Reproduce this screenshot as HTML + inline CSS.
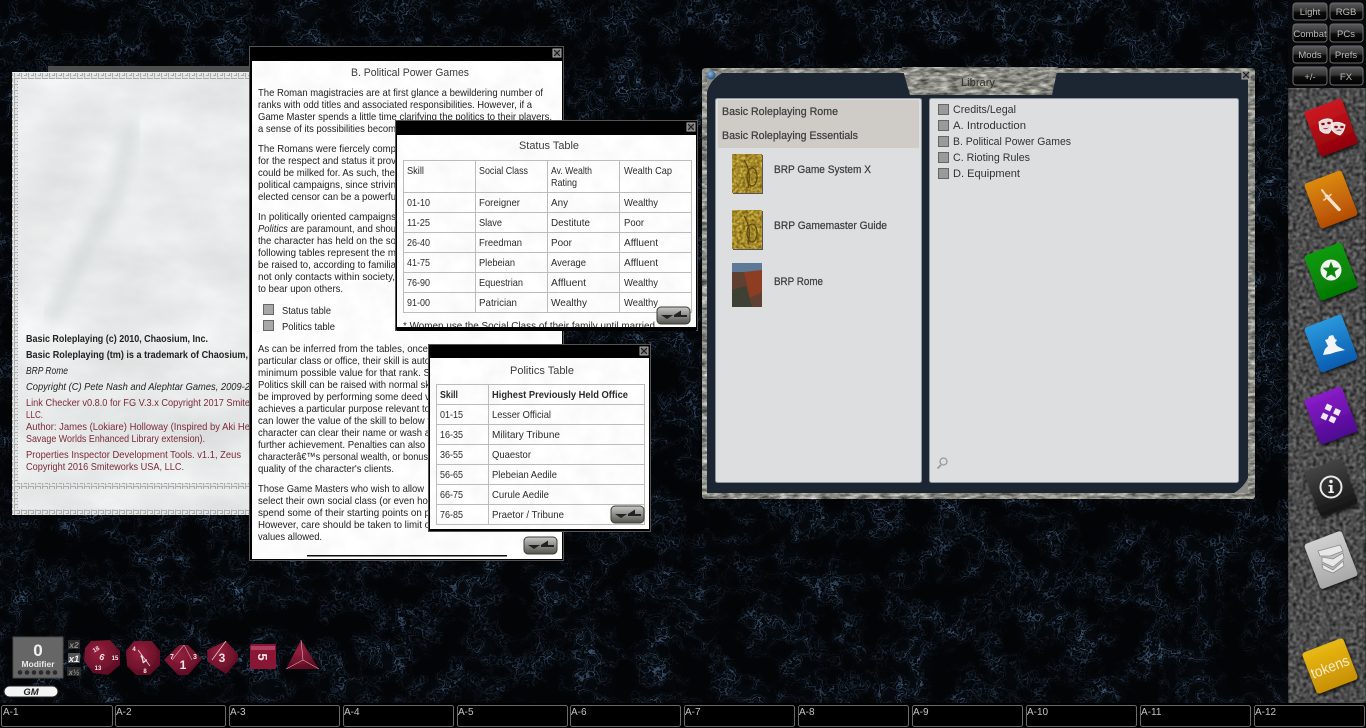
<!DOCTYPE html>
<html lang="en"><head><meta charset="utf-8"><title>Library</title>
<style>
html,body{margin:0;padding:0;background:#05080c;width:1366px;height:728px;overflow:hidden}
svg{display:block}
text{font-family:"Liberation Sans",sans-serif;font-size:10.5px;fill:#222}
.b{font-weight:bold}.i{font-style:italic}
.r{fill:#7c2a38}
.lib{font-size:11px;fill:#3e3e3e;stroke:#3e3e3e;stroke-width:.25px}
.li{font-size:11px;fill:#333}
.tb{font-size:10.5px;fill:#2c2c2c}
.t{font-size:11px;fill:#3c3c3c}
.btn{font-size:9.5px;fill:#b8b8b8;text-anchor:middle}
.hk{font-size:10px;fill:#c4c4c4}
.d{fill:#f0e6e6;font-weight:bold;text-anchor:middle}
</style></head><body>
<svg xmlns="http://www.w3.org/2000/svg" width="1366" height="728" viewBox="0 0 1366 728">
<defs>
<filter id="veins" x="0" y="0" width="100%" height="100%" color-interpolation-filters="sRGB">
<feTurbulence type="fractalNoise" baseFrequency=".05" numOctaves="5" seed="11"/>
<feColorMatrix values="1 0 0 0 0 1 0 0 0 0 1 0 0 0 0 0 0 0 0 1"/>
<feComponentTransfer result="v">
<feFuncR type="table" tableValues="0 0 0 0 0 0 0 0 0 0 0 0 0 0 0 0 .4 0 0 0 .85 0 0 0 .4 0 0 0 0 0 0 0 0 0 0 0 0 0 0 0 0"/>
<feFuncG type="table" tableValues="0 0 0 0 0 0 0 0 0 0 0 0 0 0 0 0 .4 0 0 0 .85 0 0 0 .4 0 0 0 0 0 0 0 0 0 0 0 0 0 0 0 0"/>
<feFuncB type="table" tableValues="0 0 0 0 0 0 0 0 0 0 0 0 0 0 0 0 .4 0 0 0 .85 0 0 0 .4 0 0 0 0 0 0 0 0 0 0 0 0 0 0 0 0"/>
</feComponentTransfer>
<feTurbulence type="fractalNoise" baseFrequency=".028" numOctaves="3" seed="23"/>
<feColorMatrix values="2.4 0 0 0 -.8 2.4 0 0 0 -.8 2.4 0 0 0 -.8 0 0 0 0 1" result="m"/>
<feComposite in="v" in2="m" operator="arithmetic" k1="1" k2="0" k3=".05" k4=".01"/>
<feColorMatrix values=".3 0 0 0 .004 .42 0 0 0 .01 .56 0 0 0 .018 0 0 0 0 1"/>
<feGaussianBlur stdDeviation=".35"/>
</filter>
<filter id="gran" x="0" y="0" width="100%" height="100%" color-interpolation-filters="sRGB">
<feTurbulence type="fractalNoise" baseFrequency=".3" numOctaves="3" seed="4"/>
<feColorMatrix values=".72 0 0 0 -.06 .72 0 0 0 -.06 .72 0 0 0 -.06 0 0 0 0 1"/>
<feGaussianBlur stdDeviation=".7"/>
</filter>
<filter id="metal" x="-5%" y="-5%" width="110%" height="110%" color-interpolation-filters="sRGB">
<feTurbulence type="fractalNoise" baseFrequency=".1 .3" numOctaves="3" seed="9" result="n"/>
<feColorMatrix in="n" values=".85 0 0 0 .12 .85 0 0 0 .12 .82 0 0 0 .11 0 0 0 0 1" result="g"/>
<feComposite in="g" in2="SourceAlpha" operator="in"/>
</filter>
<filter id="marble" x="0" y="0" width="100%" height="100%" color-interpolation-filters="sRGB">
<feTurbulence type="fractalNoise" baseFrequency=".012 .02" numOctaves="5" seed="3"/>
<feColorMatrix values=".13 0 0 0 .845 .13 0 0 0 .855 .13 0 0 0 .855 0 0 0 0 1"/>
</filter>
<filter id="paper" x="0" y="0" width="100%" height="100%" color-interpolation-filters="sRGB">
<feTurbulence type="fractalNoise" baseFrequency=".05" numOctaves="3" seed="6"/>
<feColorMatrix values=".05 0 0 0 .965 .05 0 0 0 .965 .05 0 0 0 .965 0 0 0 0 1"/>
</filter>
<filter id="gold" x="0" y="0" width="100%" height="100%" color-interpolation-filters="sRGB">
<feTurbulence type="fractalNoise" baseFrequency=".35" numOctaves="2" seed="2"/>
<feColorMatrix values=".7 0 0 0 .3 .65 0 0 0 .22 .3 0 0 0 .02 0 0 0 0 1"/>
</filter>
<filter id="sm"><feGaussianBlur stdDeviation=".3"/></filter>
<filter id="bl"><feGaussianBlur stdDeviation="7"/></filter>
<filter id="sh" x="-20%" y="-20%" width="150%" height="150%"><feDropShadow dx="1" dy="2" stdDeviation="1.500" flood-color="#000" flood-opacity=".75"/></filter>
<pattern id="key" width="7" height="6" patternUnits="userSpaceOnUse">
<rect width="7" height="6" fill="#e3e5e4"/><path d="M.5 5.500V.5H5.500V3.500H3" fill="none" stroke="#a8abaa" stroke-width="1"/>
</pattern>
<linearGradient id="cr" x1="0" y1="0" x2="0" y2="1"><stop offset="0" stop-color="#cc1a22"/><stop offset="1" stop-color="#900008"/></linearGradient>
<linearGradient id="co" x1="0" y1="0" x2="0" y2="1"><stop offset="0" stop-color="#dc8a10"/><stop offset="1" stop-color="#b44c04"/></linearGradient>
<linearGradient id="cg" x1="0" y1="0" x2="0" y2="1"><stop offset="0" stop-color="#109a10"/><stop offset="1" stop-color="#047804"/></linearGradient>
<linearGradient id="cb" x1="0" y1="0" x2="0" y2="1"><stop offset="0" stop-color="#2a98dc"/><stop offset="1" stop-color="#0a5cb0"/></linearGradient>
<linearGradient id="cp" x1="0" y1="0" x2="0" y2="1"><stop offset="0" stop-color="#8a1cc8"/><stop offset="1" stop-color="#4c0a90"/></linearGradient>
<linearGradient id="ck" x1="0" y1="0" x2="0" y2="1"><stop offset="0" stop-color="#444"/><stop offset="1" stop-color="#151515"/></linearGradient>
<linearGradient id="cw" x1="0" y1="0" x2="0" y2="1"><stop offset="0" stop-color="#d0d0d0"/><stop offset="1" stop-color="#a8a8a8"/></linearGradient>
<linearGradient id="cy" x1="0" y1="0" x2="0" y2="1"><stop offset="0" stop-color="#e8b814"/><stop offset="1" stop-color="#c89004"/></linearGradient>
<linearGradient id="bt" x1="0" y1="0" x2="0" y2="1"><stop offset="0" stop-color="#5c5c5c"/><stop offset=".45" stop-color="#333"/><stop offset=".55" stop-color="#0c0c0c"/><stop offset="1" stop-color="#000"/></linearGradient>
<linearGradient id="nv" x1="0" y1="0" x2="0" y2="1"><stop offset="0" stop-color="#c8c8c4"/><stop offset=".5" stop-color="#8c8c88"/><stop offset="1" stop-color="#55554f"/></linearGradient>
<radialGradient id="die" cx=".4" cy=".35" r=".75"><stop offset="0" stop-color="#96203e"/><stop offset="1" stop-color="#560a20"/></radialGradient>
<radialGradient id="orb" cx=".4" cy=".35" r=".7"><stop offset="0" stop-color="#8ab8e0"/><stop offset="1" stop-color="#1c4a74"/></radialGradient>
<g id="nav">
<rect x="0" y="0" width="33" height="17" rx="4" fill="url(#nv)" stroke="#3c3c38"/>
<path d="M4 8H16L10 12ZM17 8L24 3.500L24 8H30V10H17Z" fill="#222"/>
</g>
<g id="x"><rect x="-4" y="-4" width="8" height="8" fill="#777" stroke="#aaa"/><path d="M-3-3 3 3M3-3-3 3" stroke="#1a1a1a" stroke-width="1.100"/></g>
</defs>

<rect width="1366" height="728" filter="url(#veins)"/>

<!-- side panel -->
<rect x="1288" y="0" width="78" height="728" filter="url(#gran)"/>
<rect x="1288" y="0" width="78" height="88" fill="#07090c"/>

<!-- top buttons -->
<g stroke="#6a6a6a" stroke-width="1">
<rect x="1293" y="3" width="34" height="17" rx="3" fill="url(#bt)"/><rect x="1330" y="3" width="33" height="17" rx="3" fill="url(#bt)"/>
<rect x="1293" y="24" width="34" height="18" rx="3" fill="url(#bt)"/><rect x="1330" y="24" width="33" height="18" rx="3" fill="url(#bt)"/>
<rect x="1293" y="46" width="34" height="17" rx="3" fill="url(#bt)"/><rect x="1330" y="46" width="33" height="17" rx="3" fill="url(#bt)"/>
<rect x="1293" y="67" width="34" height="18" rx="3" fill="url(#bt)"/><rect x="1330" y="67" width="33" height="18" rx="3" fill="url(#bt)"/>
</g>
<text class="btn" x="1310" y="15">Light</text><text class="btn" x="1346" y="15">RGB</text>
<text class="btn" x="1310" y="37">Combat</text><text class="btn" x="1346" y="37">PCs</text>
<text class="btn" x="1310" y="58">Mods</text><text class="btn" x="1346" y="58">Prefs</text>
<text class="btn" x="1310" y="80">+/-</text><text class="btn" x="1346" y="80">FX</text>

<!-- side cards -->
<g filter="url(#sh)">
<rect x="-20" y="-24" width="40" height="48" rx="3" transform="translate(1331 127.500) rotate(-21)" fill="url(#cr)"/>
<rect x="-20" y="-24" width="40" height="48" rx="3" transform="translate(1331 199.500) rotate(-21)" fill="url(#co)"/>
<rect x="-20" y="-24" width="40" height="48" rx="3" transform="translate(1331 271.500) rotate(-21)" fill="url(#cg)"/>
<rect x="-20" y="-24" width="40" height="48" rx="3" transform="translate(1331 343.500) rotate(-21)" fill="url(#cb)"/>
<rect x="-20" y="-24" width="40" height="48" rx="3" transform="translate(1331 415.500) rotate(-21)" fill="url(#cp)"/>
<rect x="-20" y="-24" width="40" height="48" rx="3" transform="translate(1331 487.500) rotate(-21)" fill="url(#ck)"/>
<rect x="-20" y="-24" width="40" height="48" rx="3" transform="translate(1331 560) rotate(-21)" fill="url(#cw)"/>
<rect x="-22" y="-22" width="44" height="44" rx="3" transform="translate(1330 666) rotate(-21)" fill="url(#cy)"/>
</g>
<!-- masks -->
<g fill="#e8d8d8" stroke="#f8f0f0" stroke-width="1">
<path d="M1319 122Q1326 117 1332 120Q1333 128 1329 133Q1323 134 1320 130Z"/>
<path d="M1333 123Q1339 121 1345 125Q1344 132 1340 135Q1335 134 1332 130Z"/>
</g>
<g fill="#8a0a10">
<ellipse cx="1323" cy="124" rx="1.800" ry="1.200"/><ellipse cx="1329" cy="123" rx="1.800" ry="1.200"/><path d="M1323 128Q1326 131 1329 127Q1327 129 1323 128Z"/>
<ellipse cx="1336" cy="127" rx="1.800" ry="1.200"/><ellipse cx="1342" cy="127" rx="1.800" ry="1.200"/><path d="M1336 131Q1339 128 1342 131Q1339 130 1336 131Z"/>
</g>
<!-- sword -->
<path d="M1322 190L1326.500 196" stroke="#f0d8c0" stroke-width="2" stroke-linecap="round"/>
<path d="M1326.500 196L1339 209.500" stroke="#f6e4d0" stroke-width="3.400" stroke-linecap="round"/>
<path d="M1324 200L1331 194.500" stroke="#f0d8c0" stroke-width="1.600" stroke-linecap="round"/>
<!-- star -->
<circle cx="1331" cy="270" r="10.500" fill="#f4f4f4"/>
<path d="M1331 261.500L1333.300 267.500L1339.500 267.800L1334.700 271.800L1336.300 278L1331 274.500L1325.700 278L1327.300 271.800L1322.500 267.800L1328.700 267.500Z" fill="#0a860a"/>
<!-- wizard -->
<path d="M1323 355L1325 349L1328 346L1326 342L1325 340L1328 339L1329 336L1333 335L1335 339L1337 340L1335 343L1337 346L1345 350L1336 352L1330 354Z" fill="#f2f4f6"/>
<!-- purple -->
<g fill="#f0e8f6" stroke="#f0e8f6" stroke-width="1" stroke-linejoin="round">
<rect x="-2.500" y="-2.500" width="5" height="5" transform="translate(1328.500 407.500) rotate(25)"/>
<rect x="-2.500" y="-2.500" width="5" height="5" transform="translate(1337 412) rotate(25)"/>
<rect x="-2.500" y="-2.500" width="5" height="5" transform="translate(1324.500 416.500) rotate(25)"/>
<rect x="-2.500" y="-2.500" width="5" height="5" transform="translate(1332.500 419.500) rotate(25)"/>
</g>
<!-- info -->
<circle cx="1331" cy="487" r="10.500" fill="none" stroke="#e8e8e8" stroke-width="2"/>
<circle cx="1331" cy="481.500" r="1.700" fill="#eee"/><path d="M1328.500 485H1332.500V491.500H1334V493H1328.500V491.500H1330V486.500H1328.500Z" fill="#eee"/>
<!-- stack -->
<g fill="#e8e8e8" stroke="#8a8a8a" stroke-width=".8">
<path d="M1318 551L1340 545L1343 551L1330 556L1320 556Z"/>
<path d="M1322 557L1333 559L1343 553L1344 558L1333 567L1322 562Z"/>
<path d="M1322 564L1333 570L1343 561L1344 566L1333 573L1323 569Z"/>
</g>
<text x="0" y="5" transform="translate(1330 667) rotate(-21)" text-anchor="middle" style="font-size:15px;fill:#f6ecc8" textLength="40" lengthAdjust="spacingAndGlyphs">tokens</text>

<g filter="url(#sm)">
<!-- marble window -->
<rect x="48" y="66" width="205" height="6" fill="#4e4e4e"/>
<rect x="12" y="72" width="240" height="443" filter="url(#marble)"/>
<path d="M132 120L118 190L85 250L52 320" stroke="#c6cdce" stroke-width="14" fill="none" filter="url(#bl)" opacity=".55"/>
<rect x="12" y="73" width="240" height="6" fill="url(#key)"/>
<rect x="12" y="73" width="6" height="442" fill="url(#key)"/>
<rect x="12" y="483" width="240" height="6" fill="url(#key)"/>
<rect x="12" y="509" width="240" height="6" fill="url(#key)"/>
<text class="b" x="26" y="342" textLength="182" lengthAdjust="spacingAndGlyphs">Basic Roleplaying (c) 2010, Chaosium, Inc.</text>
<text class="b" x="26" y="358" textLength="222" lengthAdjust="spacingAndGlyphs">Basic Roleplaying (tm) is a trademark of Chaosium,</text>
<text class="i" x="26" y="374" textLength="42" lengthAdjust="spacingAndGlyphs">BRP Rome</text>
<text class="i" x="26" y="390" textLength="224" lengthAdjust="spacingAndGlyphs">Copyright (C) Pete Nash and Alephtar Games, 2009-2</text>
<text class="r" x="26" y="406" textLength="224" lengthAdjust="spacingAndGlyphs">Link Checker v0.8.0 for FG V.3.x Copyright 2017 Smite</text>
<text class="r" x="26" y="418" textLength="17" lengthAdjust="spacingAndGlyphs">LLC.</text>
<text class="r" x="26" y="430" textLength="224" lengthAdjust="spacingAndGlyphs">Author: James (Lokiare) Holloway (Inspired by Aki He</text>
<text class="r" x="26" y="442" textLength="179" lengthAdjust="spacingAndGlyphs">Savage Worlds Enhanced Library extension).</text>
<text class="r" x="26" y="458" textLength="215" lengthAdjust="spacingAndGlyphs">Properties Inspector Development Tools. v1.1, Zeus</text>
<text class="r" x="26" y="470" textLength="158" lengthAdjust="spacingAndGlyphs">Copyright 2016 Smiteworks USA, LLC.</text>

<!-- book window -->
<rect x="249.500" y="46.500" width="314" height="514" fill="#000" stroke="#555"/>
<rect x="252" y="61" width="310" height="498" filter="url(#paper)"/>
<use href="#x" x="557" y="53"/>
<text class="t" x="351" y="76" textLength="118" lengthAdjust="spacingAndGlyphs">B. Political Power Games</text>
<text x="258" y="96" textLength="285" lengthAdjust="spacingAndGlyphs">The Roman magistracies are at first glance a bewildering number of</text>
<text x="258" y="108" textLength="274" lengthAdjust="spacingAndGlyphs">ranks with odd titles and associated responsibilities. However, if a</text>
<text x="258" y="120" textLength="294" lengthAdjust="spacingAndGlyphs">Game Master spends a little time clarifying the politics to their players,</text>
<text x="258" y="132" textLength="138" lengthAdjust="spacingAndGlyphs">a sense of its possibilities becom</text>
<text x="258" y="152" textLength="138" lengthAdjust="spacingAndGlyphs">The Romans were fiercely comp</text>
<text x="258" y="164" textLength="138" lengthAdjust="spacingAndGlyphs">for the respect and status it prov</text>
<text x="258" y="176" textLength="137" lengthAdjust="spacingAndGlyphs">could be milked for. As such, the</text>
<text x="258" y="188" textLength="138" lengthAdjust="spacingAndGlyphs">political campaigns, since strivin</text>
<text x="258" y="200" textLength="138" lengthAdjust="spacingAndGlyphs">elected censor can be a powerfu</text>
<text x="258" y="220" textLength="138" lengthAdjust="spacingAndGlyphs">In politically oriented campaigns</text>
<text x="258" y="232" textLength="138" lengthAdjust="spacingAndGlyphs"><tspan class="i">Politics</tspan> are paramount, and shou</text>
<text x="258" y="244" textLength="138" lengthAdjust="spacingAndGlyphs">the character has held on the so</text>
<text x="258" y="256" textLength="138" lengthAdjust="spacingAndGlyphs">following tables represent the m</text>
<text x="258" y="268" textLength="138" lengthAdjust="spacingAndGlyphs">be raised to, according to familia</text>
<text x="258" y="280" textLength="137" lengthAdjust="spacingAndGlyphs">not only contacts within society,</text>
<text x="258" y="292" textLength="85" lengthAdjust="spacingAndGlyphs">to bear upon others.</text>
<rect x="263.500" y="304.500" width="10" height="10" fill="#a8a8a8" stroke="#666"/>
<rect x="263.500" y="320.500" width="10" height="10" fill="#a8a8a8" stroke="#666"/>
<text x="282" y="314" textLength="49" lengthAdjust="spacingAndGlyphs">Status table</text>
<text x="282" y="330" textLength="53" lengthAdjust="spacingAndGlyphs">Politics table</text>
<text x="258" y="352" textLength="170" lengthAdjust="spacingAndGlyphs">As can be inferred from the tables, once</text>
<text x="258" y="364" textLength="172" lengthAdjust="spacingAndGlyphs">particular class or office, their skill is auto</text>
<text x="258" y="376" textLength="172" lengthAdjust="spacingAndGlyphs">minimum possible value for that rank. S</text>
<text x="258" y="388" textLength="172" lengthAdjust="spacingAndGlyphs">Politics skill can be raised with normal sk</text>
<text x="258" y="400" textLength="172" lengthAdjust="spacingAndGlyphs">be improved by performing some deed v</text>
<text x="258" y="412" textLength="172" lengthAdjust="spacingAndGlyphs">achieves a particular purpose relevant to</text>
<text x="258" y="424" textLength="172" lengthAdjust="spacingAndGlyphs">can lower the value of the skill to below t</text>
<text x="258" y="436" textLength="172" lengthAdjust="spacingAndGlyphs">character can clear their name or wash a</text>
<text x="258" y="448" textLength="172" lengthAdjust="spacingAndGlyphs">further achievement. Penalties can also l</text>
<text x="258" y="460" textLength="170" lengthAdjust="spacingAndGlyphs">characterâ€™s personal wealth, or bonus</text>
<text x="258" y="472" textLength="136" lengthAdjust="spacingAndGlyphs">quality of the character's clients.</text>
<text x="258" y="492" textLength="166" lengthAdjust="spacingAndGlyphs">Those Game Masters who wish to allow</text>
<text x="258" y="504" textLength="172" lengthAdjust="spacingAndGlyphs">select their own social class (or even hol</text>
<text x="258" y="516" textLength="172" lengthAdjust="spacingAndGlyphs">spend some of their starting points on p</text>
<text x="258" y="528" textLength="172" lengthAdjust="spacingAndGlyphs">However, care should be taken to limit o</text>
<text x="258" y="540" textLength="64" lengthAdjust="spacingAndGlyphs">values allowed.</text>
<rect x="307" y="555" width="200" height="1.500" fill="#111"/>
<use href="#nav" x="524" y="537"/>

<!-- status window -->
<rect x="395.500" y="120.500" width="302" height="210" fill="#000" stroke="#555"/>
<rect x="397" y="135" width="299" height="193" filter="url(#paper)"/>
<use href="#x" x="691" y="127"/>
<text class="t" x="519" y="149" textLength="60" lengthAdjust="spacingAndGlyphs">Status Table</text>
<g stroke="#bcbcbc" stroke-width="1">
<path d="M403 160.500H692M403 192.500H692M403 212.500H692M403 232.500H692M403 252.500H692M403 272.500H692M403 292.500H692M403 312.500H692"/>
<path d="M403.500 160V313M475.500 160V313M547.500 160V313M619.500 160V313M691.500 160V313"/>
</g>
<text class="tb" x="407" y="174" textLength="17" lengthAdjust="spacingAndGlyphs">Skill</text>
<text class="tb" x="479" y="174" textLength="49" lengthAdjust="spacingAndGlyphs">Social Class</text>
<text class="tb" x="551" y="174" textLength="41" lengthAdjust="spacingAndGlyphs">Av. Wealth</text>
<text class="tb" x="551" y="186" textLength="26" lengthAdjust="spacingAndGlyphs">Rating</text>
<text class="tb" x="624" y="174" textLength="48" lengthAdjust="spacingAndGlyphs">Wealth Cap</text>
<text class="tb" x="407" y="206" textLength="23" lengthAdjust="spacingAndGlyphs">01-10</text><text class="tb" x="479" y="206" textLength="41" lengthAdjust="spacingAndGlyphs">Foreigner</text><text class="tb" x="551" y="206" textLength="17" lengthAdjust="spacingAndGlyphs">Any</text><text class="tb" x="624" y="206" textLength="34" lengthAdjust="spacingAndGlyphs">Wealthy</text>
<text class="tb" x="407" y="226" textLength="23" lengthAdjust="spacingAndGlyphs">11-25</text><text class="tb" x="479" y="226" textLength="23" lengthAdjust="spacingAndGlyphs">Slave</text><text class="tb" x="551" y="226" textLength="39" lengthAdjust="spacingAndGlyphs">Destitute</text><text class="tb" x="624" y="226" textLength="20" lengthAdjust="spacingAndGlyphs">Poor</text>
<text class="tb" x="407" y="246" textLength="23" lengthAdjust="spacingAndGlyphs">26-40</text><text class="tb" x="479" y="246" textLength="43" lengthAdjust="spacingAndGlyphs">Freedman</text><text class="tb" x="551" y="246" textLength="21" lengthAdjust="spacingAndGlyphs">Poor</text><text class="tb" x="624" y="246" textLength="34" lengthAdjust="spacingAndGlyphs">Affluent</text>
<text class="tb" x="407" y="266" textLength="23" lengthAdjust="spacingAndGlyphs">41-75</text><text class="tb" x="479" y="266" textLength="36" lengthAdjust="spacingAndGlyphs">Plebeian</text><text class="tb" x="551" y="266" textLength="35" lengthAdjust="spacingAndGlyphs">Average</text><text class="tb" x="624" y="266" textLength="34" lengthAdjust="spacingAndGlyphs">Affluent</text>
<text class="tb" x="407" y="286" textLength="23" lengthAdjust="spacingAndGlyphs">76-90</text><text class="tb" x="479" y="286" textLength="44" lengthAdjust="spacingAndGlyphs">Equestrian</text><text class="tb" x="551" y="286" textLength="35" lengthAdjust="spacingAndGlyphs">Affluent</text><text class="tb" x="624" y="286" textLength="34" lengthAdjust="spacingAndGlyphs">Wealthy</text>
<text class="tb" x="407" y="306" textLength="23" lengthAdjust="spacingAndGlyphs">91-00</text><text class="tb" x="479" y="306" textLength="38" lengthAdjust="spacingAndGlyphs">Patrician</text><text class="tb" x="551" y="306" textLength="36" lengthAdjust="spacingAndGlyphs">Wealthy</text><text class="tb" x="624" y="306" textLength="34" lengthAdjust="spacingAndGlyphs">Wealthy</text>
<text class="tb" x="403" y="329" textLength="252" lengthAdjust="spacingAndGlyphs">* Women use the Social Class of their family until married</text>
<rect x="397" y="327" width="299" height="4" fill="#000"/>
<use href="#nav" x="657" y="307"/>

<!-- politics window -->
<rect x="428.500" y="344.500" width="222" height="187" fill="#000" stroke="#555"/>
<rect x="430" y="358" width="219" height="171" filter="url(#paper)"/>
<use href="#x" x="644" y="351"/>
<text class="t" x="510" y="374" textLength="64" lengthAdjust="spacingAndGlyphs">Politics Table</text>
<g stroke="#bcbcbc" stroke-width="1">
<path d="M436 384.500H645M436 404.500H645M436 424.500H645M436 444.500H645M436 464.500H645M436 484.500H645M436 504.500H645M436 524.500H645"/>
<path d="M436.500 384V525M488.500 384V525M644.500 384V525"/>
</g>
<text class="tb b" x="440" y="398" textLength="18" lengthAdjust="spacingAndGlyphs">Skill</text>
<text class="tb b" x="492" y="398" textLength="136" lengthAdjust="spacingAndGlyphs">Highest Previously Held Office</text>
<text class="tb" x="440" y="418" textLength="23" lengthAdjust="spacingAndGlyphs">01-15</text><text class="tb" x="492" y="418" textLength="59" lengthAdjust="spacingAndGlyphs">Lesser Official</text>
<text class="tb" x="440" y="438" textLength="23" lengthAdjust="spacingAndGlyphs">16-35</text><text class="tb" x="492" y="438" textLength="68" lengthAdjust="spacingAndGlyphs">Military Tribune</text>
<text class="tb" x="440" y="458" textLength="23" lengthAdjust="spacingAndGlyphs">36-55</text><text class="tb" x="492" y="458" textLength="39" lengthAdjust="spacingAndGlyphs">Quaestor</text>
<text class="tb" x="440" y="478" textLength="23" lengthAdjust="spacingAndGlyphs">56-65</text><text class="tb" x="492" y="478" textLength="65" lengthAdjust="spacingAndGlyphs">Plebeian Aedile</text>
<text class="tb" x="440" y="498" textLength="23" lengthAdjust="spacingAndGlyphs">66-75</text><text class="tb" x="492" y="498" textLength="57" lengthAdjust="spacingAndGlyphs">Curule Aedile</text>
<text class="tb" x="440" y="518" textLength="23" lengthAdjust="spacingAndGlyphs">76-85</text><text class="tb" x="492" y="518" textLength="72" lengthAdjust="spacingAndGlyphs">Praetor / Tribune</text>
<use href="#nav" x="611" y="506"/>

<!-- library -->
<rect x="702" y="68" width="553" height="431" rx="3" filter="url(#metal)"/>
<rect x="707" y="73" width="541" height="420" fill="#1b2632"/>
<path d="M707 73H722Q710 80 707 92ZM1248 493H1234Q1244 487 1248 478Z" fill="#8a8a84"/>
<circle cx="711" cy="75" r="4.500" fill="url(#orb)"/>
<polygon points="902,67 1058,67 1052,95 910,95" filter="url(#metal)"/>
<text x="961" y="86" textLength="34" lengthAdjust="spacingAndGlyphs" style="font-size:11px;fill:#33332c">Library</text>
<use href="#x" x="1246" y="75"/>
<rect x="715.500" y="98.500" width="206" height="384" rx="2" fill="#dcdee0" stroke="#8f969c"/>
<rect x="929.500" y="98.500" width="309" height="384" rx="2" fill="#dcdee0" stroke="#8f969c"/>
<rect x="718" y="100" width="201" height="48" fill="#cfccc8"/>
<text class="lib" x="722" y="115" textLength="116" lengthAdjust="spacingAndGlyphs">Basic Roleplaying Rome</text>
<text class="lib" x="722" y="139" textLength="136" lengthAdjust="spacingAndGlyphs">Basic Roleplaying Essentials</text>
<rect x="733" y="155" width="30" height="39" fill="#555"/>
<rect x="733" y="211" width="30" height="39" fill="#555"/>
<rect x="732" y="154" width="30" height="39" filter="url(#gold)"/>
<rect x="732" y="210" width="30" height="39" filter="url(#gold)"/>
<path d="M744 160Q752 172 748 188M752 168a5 9 0 1 0 .1 0" fill="none" stroke="#5c4a10" stroke-width="1.300"/>
<path d="M744 216Q752 228 748 244M752 224a5 9 0 1 0 .1 0" fill="none" stroke="#5c4a10" stroke-width="1.300"/>
<rect x="732" y="263" width="30" height="44" fill="#5e4030"/>
<rect x="732" y="263" width="30" height="9" fill="#5c7a98"/>
<path d="M744 272L762 270V292L750 298Z" fill="#8c3c20"/>
<path d="M732 290L746 286L752 307H732Z" fill="#3c4030"/>
<text class="lib" x="774" y="173" textLength="97" lengthAdjust="spacingAndGlyphs">BRP Game System X</text>
<text class="lib" x="774" y="229" textLength="113" lengthAdjust="spacingAndGlyphs">BRP Gamemaster Guide</text>
<text class="lib" x="774" y="285" textLength="49" lengthAdjust="spacingAndGlyphs">BRP Rome</text>
<g fill="#9a9a9a" stroke="#666">
<rect x="938.500" y="104.500" width="10" height="10"/><rect x="938.500" y="120.500" width="10" height="10"/><rect x="938.500" y="136.500" width="10" height="10"/><rect x="938.500" y="152.500" width="10" height="10"/><rect x="938.500" y="168.500" width="10" height="10"/>
</g>
<text class="li" x="953" y="113" textLength="63" lengthAdjust="spacingAndGlyphs">Credits/Legal</text>
<text class="li" x="953" y="129" textLength="73" lengthAdjust="spacingAndGlyphs">A. Introduction</text>
<text class="li" x="953" y="145" textLength="118" lengthAdjust="spacingAndGlyphs">B. Political Power Games</text>
<text class="li" x="953" y="161" textLength="77" lengthAdjust="spacingAndGlyphs">C. Rioting Rules</text>
<text class="li" x="953" y="177" textLength="67" lengthAdjust="spacingAndGlyphs">D. Equipment</text>
<circle cx="943.500" cy="461.500" r="3.500" fill="none" stroke="#9a9a9a" stroke-width="1.300"/><path d="M941 465L937.500 468.500" stroke="#9a9a9a" stroke-width="1.800"/>

<!-- modifier -->
<rect x="13" y="637" width="50" height="41" fill="#666" stroke="#4a4a4a"/>
<text x="38" y="656" text-anchor="middle" class="b" style="font-size:17px;fill:#f0f0f0">0</text>
<text x="38" y="667" text-anchor="middle" class="b" style="font-size:8.500px;fill:#e8e8e8">Modifier</text>
<g fill="#2c2c2c"><circle cx="20" cy="672.500" r="2.300"/><circle cx="27" cy="672.500" r="2.300"/><circle cx="34" cy="672.500" r="2.300"/><circle cx="41" cy="672.500" r="2.300"/><circle cx="48" cy="672.500" r="2.300"/><circle cx="55" cy="672.500" r="2.300"/></g>
<rect x="68" y="640" width="12" height="9" fill="#2c2c2c"/><rect x="68" y="653" width="12" height="10" fill="#555"/><rect x="67" y="667" width="14" height="9" fill="#2c2c2c"/>
<text x="74" y="648" text-anchor="middle" class="b i" style="font-size:8.500px;fill:#8a8a8a">x2</text>
<text x="74" y="662" text-anchor="middle" class="b i" style="font-size:9.500px;fill:#f0f0f0">x1</text>
<text x="74" y="675" text-anchor="middle" class="b i" style="font-size:8px;fill:#8a8a8a">x½</text>
<rect x="4" y="686" width="54" height="11" rx="5.500" fill="#f4f4f4" stroke="#222"/>
<text x="31" y="695" text-anchor="middle" class="b i" style="font-size:9.500px;fill:#222">GM</text>

<!-- dice -->
<polygon points="91,641 110,640 120,651 120,665 108,675 93,673 84,661 85,648" fill="url(#die)"/>
<text class="d" x="102" y="660" style="font-size:9px" transform="rotate(20 102 657)">6</text><text class="d" x="97" y="651" style="font-size:6px" transform="rotate(-30 97 651)">18</text><text class="d" x="115" y="660" style="font-size:6px">15</text><text class="d" x="98" y="670" style="font-size:6px">13</text>
<polygon points="134,641 152,641 160,651 160,665 150,675 136,675 127,666 126,651" fill="url(#die)"/>
<path d="M138 650L150 666" stroke="#e8d8dc" stroke-width=".8"/><text class="d" x="143" y="663" style="font-size:11px" transform="rotate(140 143 659)">7</text><text class="d" x="134" y="651" style="font-size:6px">4</text><text class="d" x="145" y="673" style="font-size:6px">8</text>
<polygon points="179,645 188,645 202,659 188,675 178,675 164,660" fill="url(#die)"/>
<path d="M184 645L172 660M184 645L192 660" stroke="#e8d8dc" stroke-width=".7" opacity=".7"/>
<text class="d" x="183" y="669" style="font-size:12px">1</text><text class="d" x="172" y="659" style="font-size:7px">7</text><text class="d" x="195" y="659" style="font-size:7px">3</text>
<polygon points="226,641 238,654 238,660 226,674 208,662 207,650" fill="url(#die)"/>
<text class="d" x="222" y="662" style="font-size:12px">3</text><path d="M226 641L212 660" stroke="#e8d8dc" stroke-width=".7"/>
<rect x="250" y="644" width="26" height="25" rx="2" fill="#8a1436"/><rect x="251" y="646" width="24" height="4" fill="#b04060"/>
<text class="d" x="263" y="662" style="font-size:13px" transform="rotate(90 263 657)">5</text>
<polygon points="301,640 319,669 286,669" fill="url(#die)"/>
<path d="M301 640L303 660L286 669M303 660L319 669" stroke="#e8d8dc" stroke-width=".5" fill="none"/>

<!-- hotkeys -->
<rect x="0" y="703" width="1366" height="25" fill="#000"/>
<g fill="#030303" stroke="#6a6a6a">
<rect x="1.500" y="705.500" width="111" height="21" rx="2"/><rect x="115.500" y="705.500" width="110" height="21" rx="2"/><rect x="229.500" y="705.500" width="110" height="21" rx="2"/><rect x="343.500" y="705.500" width="110" height="21" rx="2"/><rect x="457.500" y="705.500" width="110" height="21" rx="2"/><rect x="570.500" y="705.500" width="110" height="21" rx="2"/><rect x="684.500" y="705.500" width="110" height="21" rx="2"/><rect x="798.500" y="705.500" width="110" height="21" rx="2"/><rect x="912.500" y="705.500" width="110" height="21" rx="2"/><rect x="1026.500" y="705.500" width="110" height="21" rx="2"/><rect x="1140.500" y="705.500" width="110" height="21" rx="2"/><rect x="1254.500" y="705.500" width="110" height="21" rx="2"/>
</g>
<text class="hk" x="3" y="715">A-1</text><text class="hk" x="116" y="715">A-2</text><text class="hk" x="230" y="715">A-3</text><text class="hk" x="344" y="715">A-4</text><text class="hk" x="458" y="715">A-5</text><text class="hk" x="571" y="715">A-6</text><text class="hk" x="685" y="715">A-7</text><text class="hk" x="799" y="715">A-8</text><text class="hk" x="913" y="715">A-9</text><text class="hk" x="1027" y="715">A-10</text><text class="hk" x="1141" y="715">A-11</text><text class="hk" x="1255" y="715">A-12</text>
</g>
</svg>
</body></html>
